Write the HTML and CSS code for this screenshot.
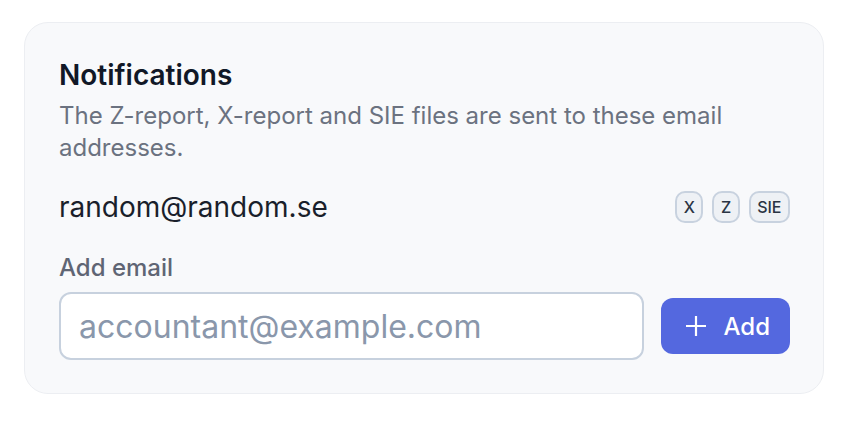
FILE: index.html
```html
<!doctype html>
<html lang="en">
  <head>
    <meta charset="UTF-8" />
    <meta name="viewport" content="width=device-width, initial-scale=1.0" />
    <title>Notifications</title>
    <link rel="stylesheet" href="styles.css">
  </head>
  <body>
    <section class="card">
      <h2 class="card-title">Notifications</h2>
      <p class="card-desc">The Z-report, X-report and SIE files are sent to these email addresses.</p>

      <ul class="recipients">
        <li class="recipient">
          <span class="recipient-email">random@random.se</span>
          <span class="tags">
            <span class="tag">X</span>
            <span class="tag">Z</span>
            <span class="tag">SIE</span>
          </span>
        </li>
      </ul>

      <form class="add-form" onsubmit="return false">
        <label class="field-label" for="email">Add email</label>
        <div class="add-row">
          <input id="email" class="email-input" type="email" placeholder="accountant@example.com">
          <button class="add-btn" type="submit">
            <svg viewBox="0 0 22 22" width="22" height="22" fill="none" stroke="currentColor" stroke-width="2.2">
              <path d="M11 1v20M1 11h20"/>
            </svg>
            Add
          </button>
        </div>
      </form>
    </section>
  </body>
</html>
```

FILE: styles.css
```css
* {
  margin: 0;
  padding: 0;
  box-sizing: border-box;
}

body {
  font-family: Inter, 'Noto Sans', sans-serif;
  background: #ffffff;
  padding: 22px 32px 0 24px;
}

.card {
  width: 800px;
  background: #f8f9fb;
  border: 1px solid #eceef2;
  border-radius: 24px;
  padding: 34px 33px 33px 34px;
}

.card-title {
  font-size: 28px;
  line-height: 36px;
  font-weight: 600;
  color: #111827;
}

.card-desc {
  margin-top: 7px;
  font-size: 24px;
  line-height: 32px;
  color: #6b7280;
}

.recipients {
  list-style: none;
  margin-top: 25px;
}

.recipient {
  display: flex;
  align-items: center;
  justify-content: space-between;
  height: 36px;
}

.recipient-email {
  font-size: 28px;
  line-height: 36px;
  color: #1a1f2b;
}

.tags {
  display: flex;
  gap: 9px;
}

.tag {
  display: inline-flex;
  align-items: center;
  justify-content: center;
  min-width: 26px;
  height: 32px;
  padding: 0 6.5px;
  font-size: 16px;
  font-weight: 500;
  color: #2a3444;
  background: #eef1f5;
  border: 2px solid #c8d2df;
  border-radius: 10px;
}

.add-form {
  margin-top: 27px;
}

.field-label {
  display: block;
  font-size: 24px;
  line-height: 32px;
  font-weight: 500;
  color: #5f6574;
}

.add-row {
  display: flex;
  align-items: center;
  gap: 17px;
  margin-top: 8px;
}

.email-input {
  flex: 1;
  height: 68px;
  padding: 0 18px;
  font-family: inherit;
  font-size: 32px;
  color: #1a1f2b;
  background: #ffffff;
  border: 2px solid #c7d1de;
  border-radius: 12px;
  outline: none;
}

.email-input::placeholder {
  color: #8a97ab;
}

.add-btn {
  display: inline-flex;
  align-items: center;
  gap: 17px;
  height: 56px;
  padding: 0 20px 0 24px;
  font-family: inherit;
  font-size: 24px;
  font-weight: 500;
  color: #ffffff;
  background: #5468df;
  border: none;
  border-radius: 12px;
  cursor: pointer;
}
```
